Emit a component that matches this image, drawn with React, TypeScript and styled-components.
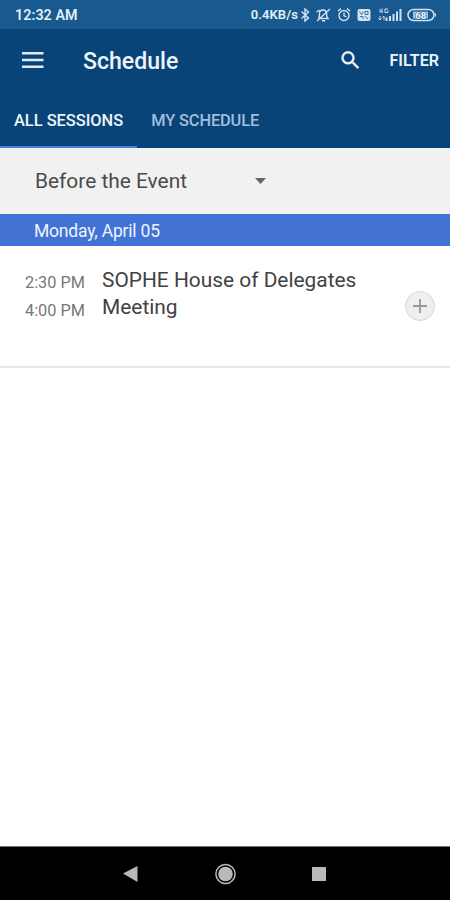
import React from "react";
import styled, { createGlobalStyle } from "styled-components";

const GlobalStyle = createGlobalStyle`
  * { box-sizing: border-box; }
  body { margin: 0; background: #fff; font-family: Roboto, "Liberation Sans", sans-serif; }
  button { font: inherit; color: inherit; border: 0; padding: 0; margin: 0; background: none; }
`;

const Screen = styled.div`
  display: flex;
  flex-direction: column;
  width: 450px;
  height: 900px;
  background: #fff;
  overflow: hidden;
`;

const StatusBar = styled.div`
  display: flex;
  align-items: center;
  flex: none;
  height: 29px;
  padding: 0 14px 0 15px;
  background: #185a8f;
  color: #e3eef7;
`;

const Clock = styled.span`
  flex: 1;
  font-size: 14.3px;
  font-weight: 600;
  letter-spacing: 0.05px;
  line-height: 16px;
`;

const Speed = styled.span`
  font-size: 13px;
  font-weight: 600;
  line-height: 16px;
  letter-spacing: 0.1px;
`;

const StatusIcons = styled.svg`
  display: block;
  width: 138px;
  height: 18px;
`;

const Header = styled.header`
  flex: none;
  height: 118.5px;
  background: #084478;
  color: #eef4fa;
`;

const Toolbar = styled.div`
  display: flex;
  align-items: center;
  height: 64px;
  padding: 0 11px 0 21px;
`;

const IconButton = styled.button`
  display: flex;
  width: 24px;
  height: 24px;
  align-items: center;
  justify-content: center;
`;

const Title = styled.h1`
  flex: 1;
  margin: 1px 0 0 38px;
  font-size: 23.1px;
  font-weight: 500;
  line-height: 28px;
`;

const FilterButton = styled.button`
  margin-left: 28px;
  font-size: 16.1px;
  font-weight: 600;
  line-height: 20px;
`;

const Tabs = styled.nav`
  display: flex;
  height: 54.5px;
`;

const Tab = styled.button<{ $active?: boolean }>`
  padding: 3px 14px 0;
  font-size: 16.4px;
  font-weight: 500;
  letter-spacing: ${(p) => (p.$active ? "0" : "-0.12px")};
  color: ${(p) => (p.$active ? "#f0f5fa" : "#a3bedb")};
  border-bottom: 2px solid ${(p) => (p.$active ? "#4b7dde" : "transparent")};
  white-space: nowrap;
`;

const GroupSelect = styled.button`
  display: flex;
  align-items: center;
  justify-content: space-between;
  flex: none;
  height: 66px;
  padding: 0 184px 0 35px;
  background: #f1f1f1;
  color: #4b4b4b;
  font-size: 20.9px;
  line-height: 26px;
`;

const DateBar = styled.div`
  flex: none;
  height: 32.5px;
  padding-left: 34px;
  background: #4273d4;
  color: #eef4ff;
  font-size: 17.5px;
  letter-spacing: -0.2px;
  line-height: 34px;
`;

const SessionRow = styled.article`
  display: grid;
  grid-template-columns: 77px 280px 1fr;
  flex: none;
  height: 122px;
  padding: 20.5px 15px 0 25px;
  border-bottom: 2px solid #e7e7e7;
`;

const Times = styled.div`
  padding-top: 2px;
  color: #777;
  font-size: 16.3px;
  line-height: 28px;
`;

const SessionTitle = styled.h2`
  margin: 0;
  color: #424242;
  font-size: 20.9px;
  font-weight: 400;
  line-height: 27px;
`;

const AddButton = styled.button`
  display: flex;
  align-items: center;
  justify-content: center;
  justify-self: end;
  width: 30px;
  height: 30px;
  margin-top: 24.5px;
  border: 1.5px solid #d6d6d6;
  border-radius: 50%;
  background: #efefef;
`;

const Content = styled.main`
  flex: 1;
`;

const NavBar = styled.footer`
  display: flex;
  align-items: center;
  justify-content: space-between;
  flex: none;
  height: 54px;
  padding: 0 124px 0 123px;
  border-top: 1px solid #777;
  background: #000;
`;

function StatusGlyphs() {
  return (
    <StatusIcons viewBox="0 0 138 18" fill="none" stroke="#cfe3f4" strokeWidth="1.4">
      <path d="M3.5 5.5 10.5 12 7 15V3l3.500 3-7 6.500" />
      <path d="M20.500 12.500h9.500c-1.300-1.300-1.500-2.500-1.500-5 0-2.200-1.500-3.500-3.500-3.500s-3.500 1.300-3.500 3.500c0 2.500-.1 3.700-1 5M24 14.700h3M19 15 32 3M18.500 6l3-2" />
      <circle cx="46" cy="9.500" r="5" />
      <path d="M46 6.500v3.300l2.500 1M40 5l3-2.500M52 5l-3-2.500" />
      <rect x="59.500" y="3" width="13" height="12" rx="2" fill="#d3e5f3" stroke="none" />
      <path d="m61.500 5.500 2 3 2-3M67 8.500v-3h3v3h-3M62 10.500h3v2.500M67 10.500l3 2.500" stroke="#40739e" strokeWidth="1" />
      <path d="M82 3v3h3M84 2.500v4M90 3h-3v3.500h3v-2M82 10v4m-1.500-1.500L82 14l1.500-1.500M86 14v-4m-1.500 1.500L86 10" strokeWidth="1" />
      <path d="M88.500 15v-3.500M92 15v-5M95.500 15V8M99 15V5.500M102.500 15V3" strokeWidth="2" />
      <rect x="110" y="3.500" width="26" height="11" rx="5.500" strokeWidth="1.500" />
      <path d="M115 5.500h15v7h-15z" fill="#9dbfdb" stroke="none" />
      <path d="M137.500 7.500v3" />
      <text x="122.800" y="12.500" textAnchor="middle" fontFamily="Roboto, sans-serif" fontSize="9.500" fontWeight="700" fill="#f0f7fc" stroke="#286696" strokeWidth="1" paintOrder="stroke">68</text>
    </StatusIcons>
  );
}

export default function App() {
  return (
    <>
      <GlobalStyle />
      <Screen>
        <StatusBar>
          <Clock>12:32 AM</Clock>
          <Speed>0.4KB/s</Speed>
          <StatusGlyphs />
        </StatusBar>
        <Header>
          <Toolbar>
            <IconButton aria-label="Menu">
              <svg width="24" height="24" fill="#dfeaf5">
                <path d="M1 3h21.500v2.500H1zM1 9.700h21.500v2.500H1zM1 16.400h21.500v2.500H1z" />
              </svg>
            </IconButton>
            <Title>Schedule</Title>
            <IconButton aria-label="Search">
              <svg width="28" height="28" viewBox="-0.500 0.700 24 24" fill="#edf4fa" stroke="#edf4fa" strokeWidth="0.400">
                <path d="M15.500 14h-.79l-.28-.27A6.470 6.470 0 0 0 16 9.500 6.500 6.500 0 1 0 9.500 16c1.610 0 3.090-.59 4.230-1.570l.27.280v.79l5 4.990L20.490 19zm-6 0C7.010 14 5 11.990 5 9.500S7.010 5 9.500 5 14 7.010 14 9.500 11.990 14 9.500 14z" />
              </svg>
            </IconButton>
            <FilterButton>FILTER</FilterButton>
          </Toolbar>
          <Tabs>
            <Tab $active>ALL SESSIONS</Tab>
            <Tab>MY SCHEDULE</Tab>
          </Tabs>
        </Header>
        <GroupSelect>
          <span>Before the Event</span>
          <svg width="11" height="6" fill="#666"><path d="M0 0h11L5.500 6z" /></svg>
        </GroupSelect>
        <DateBar>Monday, April 05</DateBar>
        <Content>
          <SessionRow>
            <Times>
              <div>2:30 PM</div>
              <div>4:00 PM</div>
            </Times>
            <SessionTitle>SOPHE House of Delegates Meeting</SessionTitle>
            <AddButton aria-label="Add session">
              <svg width="14" height="14" stroke="#999" strokeWidth="1.800"><path d="M7 0v14M0 7h14" /></svg>
            </AddButton>
          </SessionRow>
        </Content>
        <NavBar>
          <svg width="15" height="18" fill="#b9b9b9"><path d="M0 8.500 14.500 1v16z" /></svg>
          <svg width="22" height="22">
            <circle cx="11.500" cy="11" r="9.600" fill="none" stroke="#b9b9b9" strokeWidth="1.500" />
            <circle cx="11.500" cy="11" r="7.300" fill="#b9b9b9" />
          </svg>
          <svg width="14" height="14" fill="#b9b9b9"><path d="M0 0h14v14H0z" /></svg>
        </NavBar>
      </Screen>
    </>
  );
}
